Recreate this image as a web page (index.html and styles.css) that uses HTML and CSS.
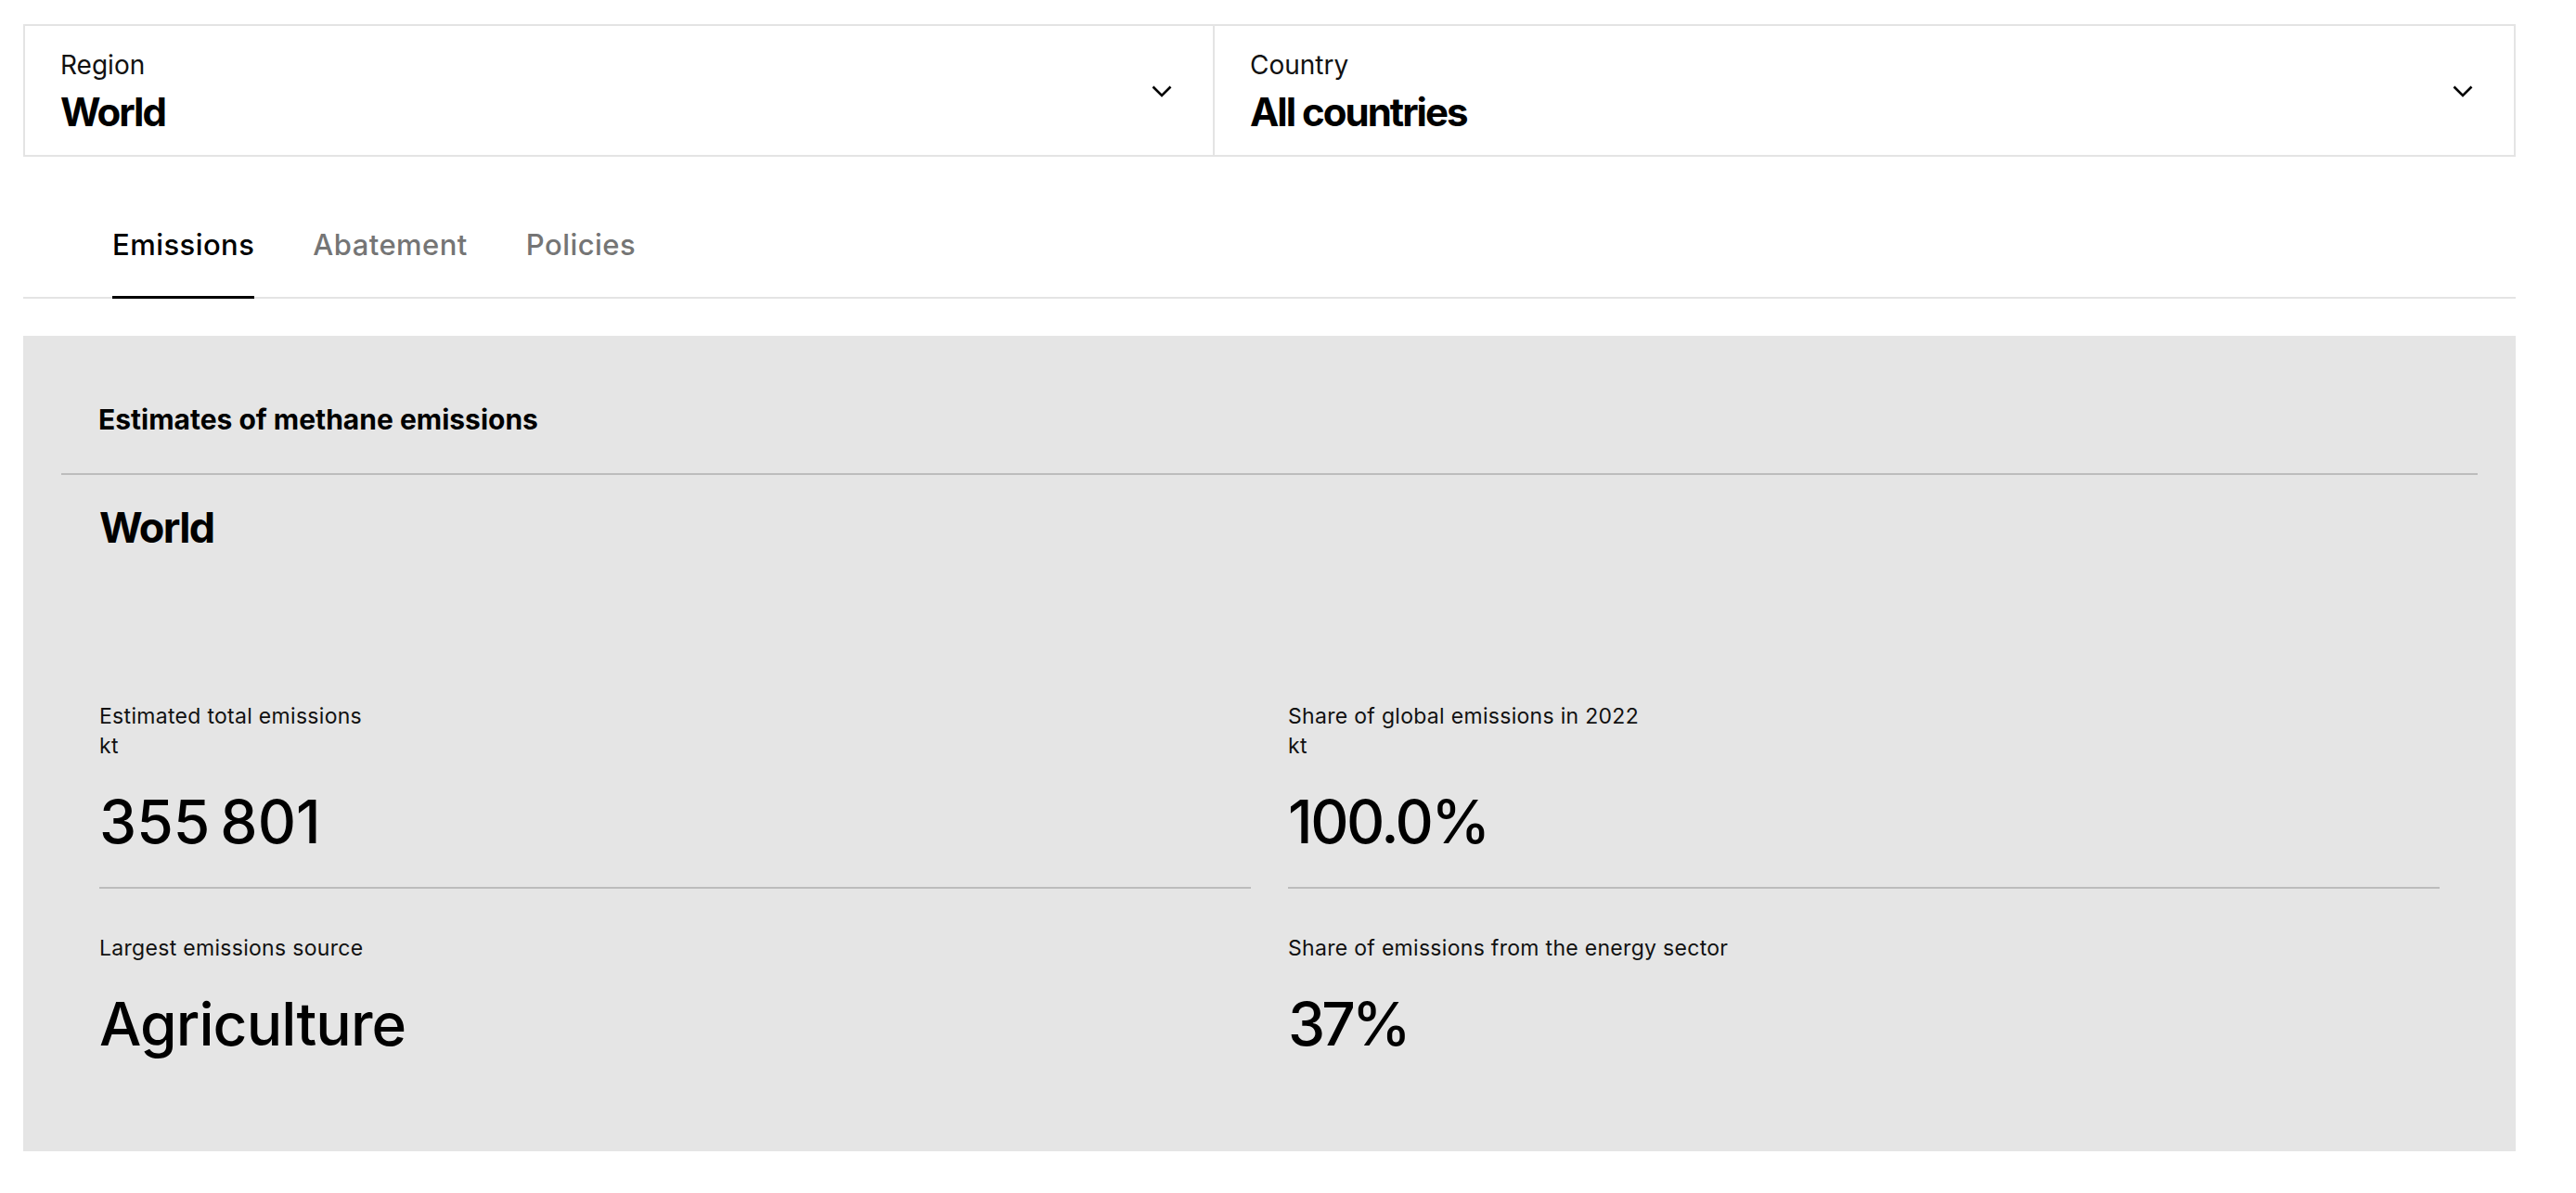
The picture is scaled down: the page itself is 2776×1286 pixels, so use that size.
FILE: index.html
```html
<!DOCTYPE html>
<html lang="en">
<head>
<meta charset="utf-8">
<title>Methane tracker</title>
<link rel="stylesheet" href="styles.css">
</head>
<body>
<div class="page">
  <div class="selectors">
    <div class="select">
      <div class="select-text">
        <div class="select-label">Region</div>
        <div class="select-value">World</div>
      </div>
      <svg class="chevron" viewBox="0 0 22 13" width="22" height="13"><path d="M1.5 1.5 L11 11 L20.5 1.5" fill="none" stroke="#000" stroke-width="2.6"/></svg>
    </div>
    <div class="select">
      <div class="select-text">
        <div class="select-label">Country</div>
        <div class="select-value">All countries</div>
      </div>
      <svg class="chevron" viewBox="0 0 22 13" width="22" height="13"><path d="M1.5 1.5 L11 11 L20.5 1.5" fill="none" stroke="#000" stroke-width="2.6"/></svg>
    </div>
  </div>

  <div class="tabs">
    <div class="tab active">Emissions</div>
    <div class="tab">Abatement</div>
    <div class="tab">Policies</div>
  </div>

  <section class="panel">
    <h2 class="panel-title">Estimates of methane emissions</h2>
    <div class="panel-body">
      <h3 class="place">World</h3>
      <div class="metrics">
        <div class="metric">
          <div class="metric-label">Estimated total emissions<br>kt</div>
          <div class="metric-value numeric tight">355&#8239;801</div>
        </div>
        <div class="metric">
          <div class="metric-label">Share of global emissions in 2022<br>kt</div>
          <div class="metric-value numeric">100.0%</div>
        </div>
        <div class="metric last">
          <div class="metric-label">Largest emissions source</div>
          <div class="metric-value">Agriculture</div>
        </div>
        <div class="metric last">
          <div class="metric-label">Share of emissions from the energy sector</div>
          <div class="metric-value numeric tight">37%</div>
        </div>
      </div>
    </div>
  </section>
</div>
</body>
</html>
```

FILE: styles.css
```css
* { box-sizing: border-box; }

html, body {
  margin: 0;
  padding: 0;
  background: #fff;
}

body {
  font-family: Inter, "Noto Sans", "Liberation Sans", sans-serif;
  color: #000;
}

.page {
  width: 2686px;
  margin-left: 25px;
  padding-top: 26px;
  padding-bottom: 47px;
}

/* Selectors */
.selectors {
  display: grid;
  grid-template-columns: 1280px 1fr;
  border: 2px solid #e4e4e4;
  height: 143px;
}

.select {
  display: flex;
  align-items: center;
  justify-content: space-between;
  padding: 0 44px 0 38px;
}

.select + .select {
  border-left: 2px solid #e4e4e4;
}

.select-text {
  display: flex;
  flex-direction: column;
  gap: 8px;
  padding-top: 4px;
}

.select-label {
  font-size: 28px;
  line-height: 34px;
  color: #111;
}

.select-value {
  font-size: 42px;
  line-height: 52px;
  font-weight: 700;
  letter-spacing: -2px;
}

.chevron {
  display: block;
  margin-top: 2px;
}

/* Tabs */
.tabs {
  display: flex;
  gap: 63px;
  padding-left: 96px;
  margin-top: 77px;
  border-bottom: 2px solid #e4e4e4;
}

.tab {
  font-size: 31px;
  line-height: 36px;
  font-weight: 500;
  letter-spacing: 0.45px;
  color: #757575;
  padding-bottom: 37px;
  margin-bottom: -2px;
  border-bottom: 3px solid transparent;
}

.tab.active {
  color: #000;
  border-bottom-color: #000;
}

/* Panel */
.panel {
  margin-top: 40px;
  background: #e5e5e5;
  padding: 72px 41px 97px;
}

.panel-title {
  margin: 0;
  padding: 0 40px 40px;
  font-size: 30px;
  line-height: 36px;
  font-weight: 700;
  letter-spacing: 0;
  border-bottom: 2px solid #bcbcbc;
}

.panel-body {
  padding: 0 41px;
}

.place {
  margin: 30px 0 0;
  font-size: 45px;
  line-height: 54px;
  font-weight: 700;
  letter-spacing: -1.6px;
}

.metrics {
  margin-top: 160px;
  display: grid;
  grid-template-columns: 1fr 1fr;
  column-gap: 40px;
  row-gap: 48px;
}

.metric {
  display: flex;
  flex-direction: column;
  gap: 28px;
  padding-bottom: 32px;
  border-bottom: 2px solid #bcbcbc;
}

.metric.last {
  border-bottom-color: transparent;
  padding-bottom: 0;
}

.metric-label {
  font-size: 23px;
  line-height: 32px;
  letter-spacing: 0.3px;
  color: #111;
}

.metric-value {
  font-size: 64px;
  line-height: 76px;
  font-weight: 500;
  letter-spacing: -0.9px;
}

.metric-value.numeric {
  letter-spacing: -2.4px;
}

.metric-value.numeric.tight {
  letter-spacing: -3.8px;
}
```
